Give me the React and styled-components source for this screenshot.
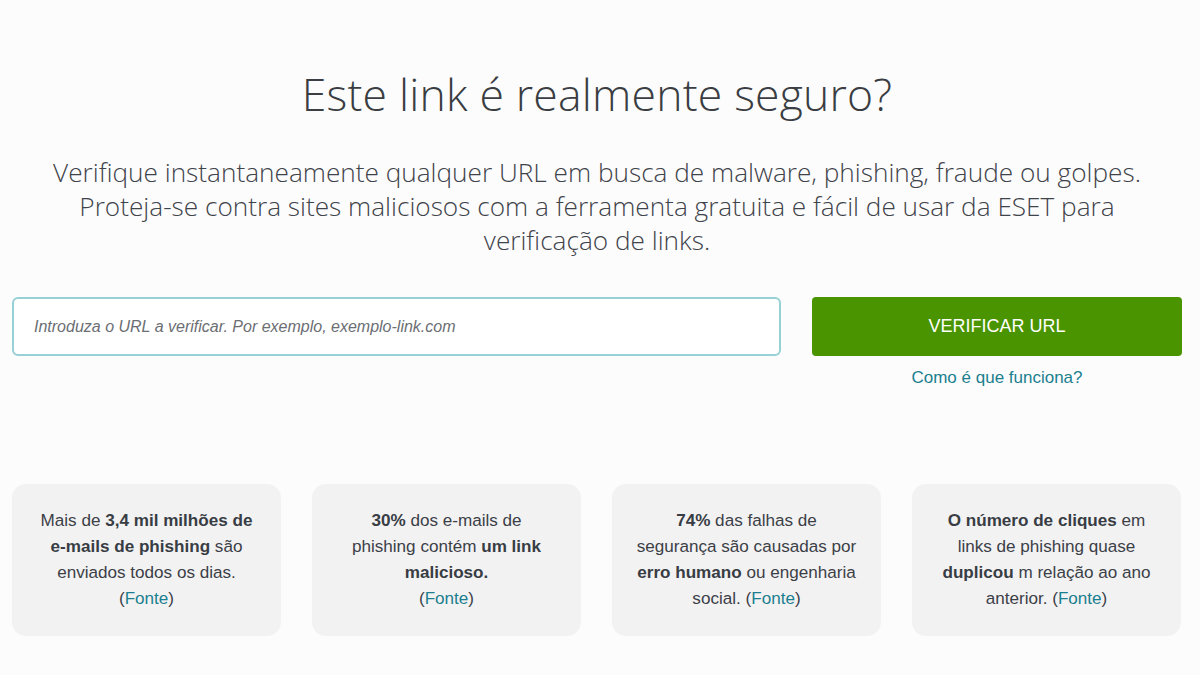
import React from 'react';
import styled, { createGlobalStyle } from 'styled-components';

const GlobalStyle = createGlobalStyle`
  html, body {
    margin: 0;
    padding: 0;
    background: #fcfcfc;
  }
  body {
    font-family: "Liberation Sans", Arial, sans-serif;
    color: #3b4047;
  }
`;

const Page = styled.main`
  width: 1170px;
  padding: 0 18px 0 12px;
  box-sizing: content-box;
`;

const Hero = styled.section`
  text-align: center;
  padding-top: 66px;
  h1 {
    margin: 0;
    font-family: "Open Sans", "Noto Sans", sans-serif;
    font-weight: 300;
    font-size: 44.5px;
    line-height: 56px;
    color: #3a3d42;
    letter-spacing: 0.2px;
  }
  p {
    margin: 33px 0 0;
    font-family: "Open Sans", "Noto Sans", sans-serif;
    font-weight: 300;
    font-size: 26.2px;
    line-height: 34px;
    color: #3f434a;
    white-space: nowrap;
  }
`;

const Checker = styled.section`
  display: flex;
  gap: 31px;
  margin-top: 40px;
`;

const UrlInput = styled.input`
  flex: 1;
  height: 59px;
  box-sizing: border-box;
  border: 2px solid #97d0d5;
  border-radius: 6px;
  background: #fff;
  padding: 0 20px;
  font-family: "Liberation Sans", Arial, sans-serif;
  font-size: 16px;
  font-style: italic;
  outline: none;
  &::placeholder {
    color: #6b6e73;
  }
`;

const Actions = styled.div`
  width: 370px;
  display: flex;
  flex-direction: column;
  align-items: center;
  gap: 12px;
`;

const VerifyButton = styled.button`
  width: 100%;
  height: 59px;
  border: none;
  border-radius: 4px;
  background: #4a9400;
  color: #fff;
  font-family: "Liberation Sans", Arial, sans-serif;
  font-size: 18px;
  cursor: pointer;
`;

const HowLink = styled.a`
  color: #1b7f8f;
  font-size: 17px;
  line-height: 20px;
  text-decoration: none;
`;

const Stats = styled.section`
  display: grid;
  grid-template-columns: repeat(4, 269px);
  gap: 31px;
  margin-top: 96px;
`;

const StatCard = styled.div`
  height: 152px;
  box-sizing: border-box;
  background: #f3f2f3;
  border-radius: 14px;
  display: flex;
  align-items: center;
  justify-content: center;
  padding: 0 10px;
  p {
    margin: 0;
    text-align: center;
    font-size: 17.1px;
    line-height: 26px;
    color: #3b4047;
    white-space: nowrap;
  }
  b {
    font-weight: 700;
    color: #383d44;
  }
`;

const Source = styled.a`
  color: #1b7f8f;
  text-decoration: none;
`;

const stats = [
  {
    id: 1,
    content: (
      <>
        Mais de <b>3,4 mil milhões de</b>
        <br />
        <b>e-mails de phishing</b> são
        <br />
        enviados todos os dias.
        <br />
        (<Source href="#">Fonte</Source>)
      </>
    ),
  },
  {
    id: 2,
    content: (
      <>
        <b>30%</b> dos e-mails de
        <br />
        phishing contém <b>um link</b>
        <br />
        <b>malicioso.</b>
        <br />
        (<Source href="#">Fonte</Source>)
      </>
    ),
  },
  {
    id: 3,
    content: (
      <>
        <b>74%</b> das falhas de
        <br />
        segurança são causadas por
        <br />
        <b>erro humano</b> ou engenharia
        <br />
        social. (<Source href="#">Fonte</Source>)
      </>
    ),
  },
  {
    id: 4,
    content: (
      <>
        <b>O número de cliques</b> em
        <br />
        links de phishing quase
        <br />
        <b>duplicou</b> m relação ao ano
        <br />
        anterior. (<Source href="#">Fonte</Source>)
      </>
    ),
  },
];

export default function App() {
  return (
    <>
      <GlobalStyle />
      <Page>
        <Hero>
          <h1>Este link é realmente seguro?</h1>
          <p>
            Verifique instantaneamente qualquer URL em busca de malware, phishing, fraude ou golpes.
            <br />
            Proteja-se contra sites maliciosos com a ferramenta gratuita e fácil de usar da ESET para
            <br />
            verificação de links.
          </p>
        </Hero>
        <Checker>
          <UrlInput placeholder="Introduza o URL a verificar. Por exemplo, exemplo-link.com" />
          <Actions>
            <VerifyButton>VERIFICAR URL</VerifyButton>
            <HowLink href="#">Como é que funciona?</HowLink>
          </Actions>
        </Checker>
        <Stats>
          {stats.map((s) => (
            <StatCard key={s.id}>
              <p>{s.content}</p>
            </StatCard>
          ))}
        </Stats>
      </Page>
    </>
  );
}
